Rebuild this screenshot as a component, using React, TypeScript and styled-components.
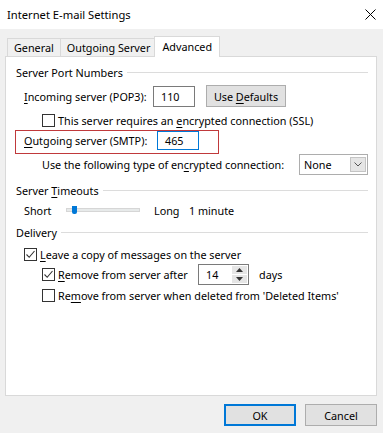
import React from "react";
import styled, { createGlobalStyle } from "styled-components";

const GlobalStyle = createGlobalStyle`
    body {
        margin: 0;
        background: #fff;
        font-family: "Noto Sans", "Segoe UI", sans-serif;
        font-size: 10.8px;
        color: #000;
    }
`;

const Window = styled.div`
    width: 383px;
    height: 433px;
    display: flex;
    flex-direction: column;
    background: #f0f0f0;
`;

const TitleBar = styled.div`
    height: 29px;
    background: #fff;
    display: flex;
    align-items: center;
    justify-content: space-between;
    padding: 0 7px;
    font-size: 11.2px;
`;

const Body = styled.div`
    flex: 1;
    display: flex;
    flex-direction: column;
    padding: 7px 6px 0 5px;
`;

const Tabs = styled.div`
    height: 20px;
    display: flex;
    align-items: flex-end;
    padding-left: 2px;
`;

const Tab = styled.div<{ $active?: boolean }>`
    box-sizing: border-box;
    height: ${p => (p.$active ? "21px" : "18px")};
    margin-bottom: ${p => (p.$active ? "-1px" : "0")};
    margin-left: ${p => (p.$active ? "-2px" : "0")};
    padding: ${p => (p.$active ? "0 7px 2px" : "0 6px")};
    border: 1px solid #d9d9d9;
    border-bottom: none;
    border-right: ${p => (p.$active ? "1px solid #d9d9d9" : "none")};
    background: ${p => (p.$active ? "#fff" : "#f0f0f0")};
    display: flex;
    align-items: center;
    position: relative;
    z-index: ${p => (p.$active ? 1 : 0)};
`;

const Panel = styled.div`
    box-sizing: border-box;
    height: 340px;
    background: #fff;
    border: 1px solid #d9d9d9;
    padding: 7px 8px 0 10px;
    display: flex;
    flex-direction: column;
`;

const GroupHeader = styled.div<{ $mt?: number }>`
    height: 16px;
    margin-top: ${p => p.$mt ?? 0}px;
    display: flex;
    align-items: center;
    gap: 4px;
    white-space: nowrap;
    &::after {
        content: "";
        flex: 1;
        height: 1px;
        background: #dcdcdc;
    }
`;

const Row = styled.div<{ $mt?: number; $indent?: number; $h?: number }>`
    height: ${p => p.$h ?? 16}px;
    margin-top: ${p => p.$mt ?? 0}px;
    padding-left: ${p => p.$indent ?? 0}px;
    display: flex;
    align-items: center;
    white-space: nowrap;
`;

const Label = styled.span<{ $w?: number }>`
    width: ${p => (p.$w ? `${p.$w}px` : "auto")};
    flex: none;
    white-space: nowrap;
`;

const Key = styled.span`
    text-decoration: underline;
    text-underline-offset: 2px;
`;

const TextBox = styled.div<{ $focus?: boolean; $w?: number; $h?: number }>`
    box-sizing: border-box;
    width: ${p => p.$w ?? 42}px;
    height: ${p => p.$h ?? 21}px;
    border: 1px solid ${p => (p.$focus ? "#0078d7" : "#7a7a7a")};
    background: #fff;
    padding-left: 7px;
    display: flex;
    align-items: center;
`;

const Button = styled.div<{ $default?: boolean; $w?: number; $ml?: number }>`
    box-sizing: border-box;
    width: ${p => p.$w ?? 72}px;
    height: 22px;
    margin-left: ${p => p.$ml ?? 0}px;
    background: #e1e1e1;
    border: ${p => (p.$default ? "2px solid #0078d7" : "1px solid #adadad")};
    display: flex;
    align-items: center;
    justify-content: center;
    white-space: nowrap;
`;

const HighlightBox = styled.div`
    box-sizing: border-box;
    width: 204px;
    height: 24px;
    margin: 2px 0 0 -1px;
    border: 1px solid #c0393b;
    padding-left: 8px;
    display: flex;
    align-items: flex-start;
`;

const BoxBody = styled.div`
    height: 19px;
    display: flex;
    align-items: center;
`;

const Select = styled.div`
    box-sizing: border-box;
    width: 69px;
    height: 21px;
    margin-left: auto;
    border: 1px solid #adadad;
    background: #fff;
    display: flex;
    align-items: center;
    justify-content: space-between;
    padding: 0 1px 0 4px;
`;

const DropButton = styled.div`
    box-sizing: border-box;
    width: 16px;
    height: 15px;
    background: #e5e5e5;
    border: 1px solid #c4c4c4;
    display: flex;
    align-items: center;
    justify-content: center;
`;

const Box = styled.div`
    box-sizing: border-box;
    width: 13px;
    height: 13px;
    border: 1px solid #333;
    background: #fff;
    margin-right: 3px;
    flex: none;
    display: flex;
    align-items: center;
    justify-content: center;
`;

const Slider = styled.div`
    position: relative;
    width: 74px;
    height: 16px;
    margin-right: 14px;
    flex: none;
`;

const Track = styled.div`
    position: absolute;
    left: 0;
    right: 0;
    top: 6px;
    height: 4px;
    box-sizing: border-box;
    background: #e7eaea;
    border: 1px solid #d6d6d6;
`;

const Thumb = styled.div`
    position: absolute;
    left: 6px;
    top: 4px;
    width: 5px;
    height: 8px;
    background: #0078d7;
    border-radius: 0 0 2px 2px;
`;

const Spin = styled.div`
    box-sizing: border-box;
    width: 51px;
    height: 21px;
    margin-right: 10px;
    border: 1px solid #7a7a7a;
    background: #fff;
    display: flex;
    align-items: center;
    padding: 0 1px 0 7px;
`;

const SpinButtons = styled.div`
    margin-left: auto;
    width: 15px;
    height: 17px;
    display: flex;
    flex-direction: column;
    gap: 1px;
`;

const SpinButton = styled.div`
    flex: 1;
    background: #e5e5e5;
    display: flex;
    align-items: center;
    justify-content: center;
`;

const Footer = styled.div`
    display: flex;
    justify-content: flex-end;
    gap: 9px;
    margin-top: 8px;
`;

const Check = ({ on }: { on?: boolean }) => (
    <Box>
        {on && (
            <svg width="11" height="11" viewBox="0 0 11 11">
                <path d="M1.5 5.5 L4.2 8.3 L9.5 2" fill="none" stroke="#333" strokeWidth="1.1" />
            </svg>
        )}
    </Box>
);

const App = () => {
    return (
        <>
            <GlobalStyle />
            <Window>
                <TitleBar>
                    <span>Internet E-mail Settings</span>
                    <svg width="11" height="11" viewBox="0 0 11 11">
                        <path d="M0.5 0.5 L10.5 10.5 M10.5 0.5 L0.5 10.5" stroke="#000" strokeWidth="1" />
                    </svg>
                </TitleBar>
                <Body>
                    <Tabs>
                        <Tab>General</Tab>
                        <Tab>Outgoing Server</Tab>
                        <Tab $active>Advanced</Tab>
                    </Tabs>
                    <Panel>
                        <GroupHeader><span>Server Port Numbers</span></GroupHeader>
                        <Row $mt={5} $indent={8} $h={22}>
                            <Label $w={129}><Key>I</Key>ncoming server (POP3):</Label>
                            <TextBox>110</TextBox>
                            <Button $w={80} $ml={11}><span>Use <Key>D</Key>efaults</span></Button>
                        </Row>
                        <Row $mt={5} $indent={26}>
                            <Check />
                            <span>This server requires an <Key>e</Key>ncrypted connection (SSL)</span>
                        </Row>
                        <HighlightBox>
                            <BoxBody>
                                <Label $w={133}><Key>O</Key>utgoing server (SMTP):</Label>
                                <TextBox $focus $h={19}>465</TextBox>
                            </BoxBody>
                        </HighlightBox>
                        <Row $indent={26} $h={21}>
                            <span>Use the following type of en<Key>c</Key>rypted connection:</span>
                            <Select>
                                <span>None</span>
                                <DropButton>
                                    <svg width="8" height="5" viewBox="0 0 8 5">
                                        <path d="M0.5 0.5 L4 4 L7.5 0.5" fill="none" stroke="#555" strokeWidth="1" />
                                    </svg>
                                </DropButton>
                            </Select>
                        </Row>
                        <GroupHeader $mt={7}><span>Server <Key>T</Key>imeouts</span></GroupHeader>
                        <Row $mt={4} $indent={8}>
                            <Label $w={42}>Short</Label>
                            <Slider>
                                <Track />
                                <Thumb />
                            </Slider>
                            <Label $w={35}>Long</Label>
                            <span>1 minute</span>
                        </Row>
                        <GroupHeader $mt={6}><span>Delivery</span></GroupHeader>
                        <Row $mt={6} $indent={8}>
                            <Check on />
                            <span><Key>L</Key>eave a copy of messages on the server</span>
                        </Row>
                        <Row $mt={2} $indent={26} $h={21}>
                            <Check on />
                            <Label $w={140}><Key>R</Key>emove from server after</Label>
                            <Spin>
                                <span>14</span>
                                <SpinButtons>
                                    <SpinButton>
                                        <svg width="7" height="4" viewBox="0 0 7 4"><path d="M0 4 L3.5 0 L7 4 Z" fill="#333" /></svg>
                                    </SpinButton>
                                    <SpinButton>
                                        <svg width="7" height="4" viewBox="0 0 7 4"><path d="M0 0 L3.5 4 L7 0 Z" fill="#333" /></svg>
                                    </SpinButton>
                                </SpinButtons>
                            </Spin>
                            <span>days</span>
                        </Row>
                        <Row $mt={2} $indent={26}>
                            <Check />
                            <span>Re<Key>m</Key>ove from server when deleted from 'Deleted Items'</span>
                        </Row>
                    </Panel>
                    <Footer>
                        <Button $default>OK</Button>
                        <Button>Cancel</Button>
                    </Footer>
                </Body>
            </Window>
        </>
    );
};

export default App;
